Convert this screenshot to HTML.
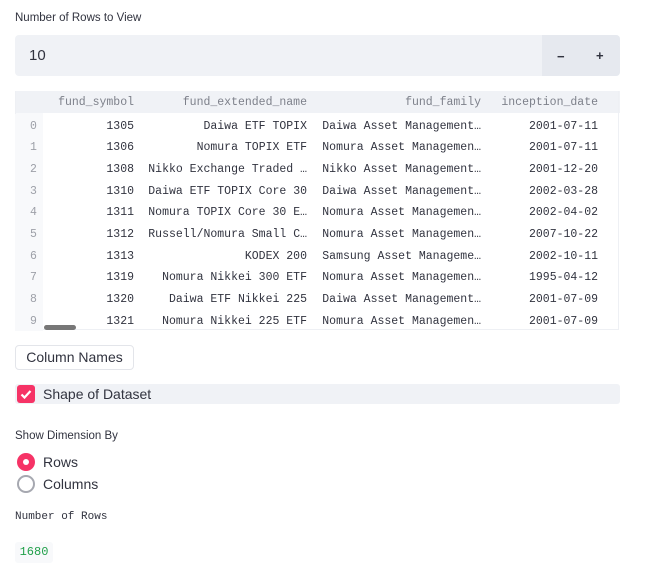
<!DOCTYPE html>
<html><head><style>
body{margin:0;width:652px;height:573px;background:#fff;font-family:"Liberation Sans",sans-serif;color:#31333f;position:relative;overflow:hidden}
.a{position:absolute}
.mono{font-family:"Liberation Mono",monospace}
table{border-collapse:collapse;font-family:"Liberation Mono",monospace;font-size:11.5px}
td,th{height:21.67px;padding:0;text-align:right;white-space:nowrap;font-weight:normal}
th{color:#7d808a;height:23px}
td{color:#31333f;padding-top:3px;box-sizing:border-box}
td.i{color:#9da0a8;text-align:left;padding-left:15px;background:#f8f9fb}
</style></head><body>
<div class="a" style="left:15px;top:12px;font-size:11.5px">Number of Rows to View</div>
<div class="a" style="left:15px;top:35px;width:605px;height:41px;background:#f0f2f6;border-radius:4px"></div>
<div class="a" style="left:542px;top:35px;width:78px;height:41px;background:#e6e9ef;border-radius:0 4px 4px 0"></div>
<div class="a" style="left:29px;top:47px;font-size:15px">10</div>
<div class="a" style="left:557px;top:49px;font-size:13px;font-weight:bold">−</div>
<div class="a" style="left:596px;top:48px;font-size:13px;font-weight:bold">+</div>
<div class="a" style="left:15px;top:91px;width:605px;height:22px;background:#f0f2f6"></div>
<div class="a" style="left:15px;top:113px;width:28px;height:217px;background:#f8f9fb"></div>
<div class="a" style="left:15px;top:91px;width:604px;height:239px;border:1px solid #eef0f4;border-top:none;box-sizing:border-box"></div>
<table class="a" style="left:15px;top:91px">
<tr><th style="width:28px"></th><th style="width:91px">fund_symbol</th><th style="width:173px">fund_extended_name</th><th style="width:174px">fund_family</th><th style="width:117px">inception_date</th></tr>
<tr><td class="i">0</td><td>1305</td><td>Daiwa ETF TOPIX</td><td>Daiwa Asset Management…</td><td>2001-07-11</td></tr>
<tr><td class="i">1</td><td>1306</td><td>Nomura TOPIX ETF</td><td>Nomura Asset Managemen…</td><td>2001-07-11</td></tr>
<tr><td class="i">2</td><td>1308</td><td>Nikko Exchange Traded …</td><td>Nikko Asset Management…</td><td>2001-12-20</td></tr>
<tr><td class="i">3</td><td>1310</td><td>Daiwa ETF TOPIX Core 30</td><td>Daiwa Asset Management…</td><td>2002-03-28</td></tr>
<tr><td class="i">4</td><td>1311</td><td>Nomura TOPIX Core 30 E…</td><td>Nomura Asset Managemen…</td><td>2002-04-02</td></tr>
<tr><td class="i">5</td><td>1312</td><td>Russell/Nomura Small C…</td><td>Nomura Asset Managemen…</td><td>2007-10-22</td></tr>
<tr><td class="i">6</td><td>1313</td><td>KODEX 200</td><td>Samsung Asset Manageme…</td><td>2002-10-11</td></tr>
<tr><td class="i">7</td><td>1319</td><td>Nomura Nikkei 300 ETF</td><td>Nomura Asset Managemen…</td><td>1995-04-12</td></tr>
<tr><td class="i">8</td><td>1320</td><td>Daiwa ETF Nikkei 225</td><td>Daiwa Asset Management…</td><td>2001-07-09</td></tr>
<tr><td class="i">9</td><td>1321</td><td>Nomura Nikkei 225 ETF</td><td>Nomura Asset Managemen…</td><td>2001-07-09</td></tr>
</table>
<div class="a" style="left:44px;top:325px;width:32px;height:5px;background:#777;border-radius:3px"></div>
<div class="a" style="left:15px;top:345px;width:117px;height:23px;border:1px solid #e3e5ea;border-radius:4px;font-size:14px;line-height:23px;text-align:center">Column Names</div>
<div class="a" style="left:15px;top:384px;width:605px;height:20px;background:#f0f2f6;border-radius:3px"></div>
<div class="a" style="left:17px;top:385px;width:18px;height:18px;background:#f63366;border-radius:3px"></div>
<svg class="a" style="left:17px;top:385px" width="18" height="18"><path d="M4.5 9.5l3 3 6-6.5" stroke="#fff" stroke-width="2.2" fill="none"/></svg>
<div class="a" style="left:43px;top:386px;font-size:14px">Shape of Dataset</div>
<div class="a" style="left:15px;top:430px;font-size:11.5px">Show Dimension By</div>
<div class="a" style="left:17px;top:453px;width:18px;height:18px;border-radius:50%;background:#f63366"></div>
<div class="a" style="left:23px;top:459px;width:6px;height:6px;border-radius:50%;background:#fff"></div>
<div class="a" style="left:43px;top:454px;font-size:14px">Rows</div>
<div class="a" style="left:17px;top:475px;width:14px;height:14px;border-radius:50%;border:2px solid #a6a8b0"></div>
<div class="a" style="left:43px;top:476px;font-size:14px">Columns</div>
<div class="a mono" style="left:15px;top:511px;font-size:11px">Number of Rows</div>
<div class="a mono" style="left:15px;top:542px;width:38px;height:21px;background:#f8f9fb;border-radius:3px;color:#21a04a;font-size:12px;line-height:21px;text-align:center">1680</div>
</body></html>
